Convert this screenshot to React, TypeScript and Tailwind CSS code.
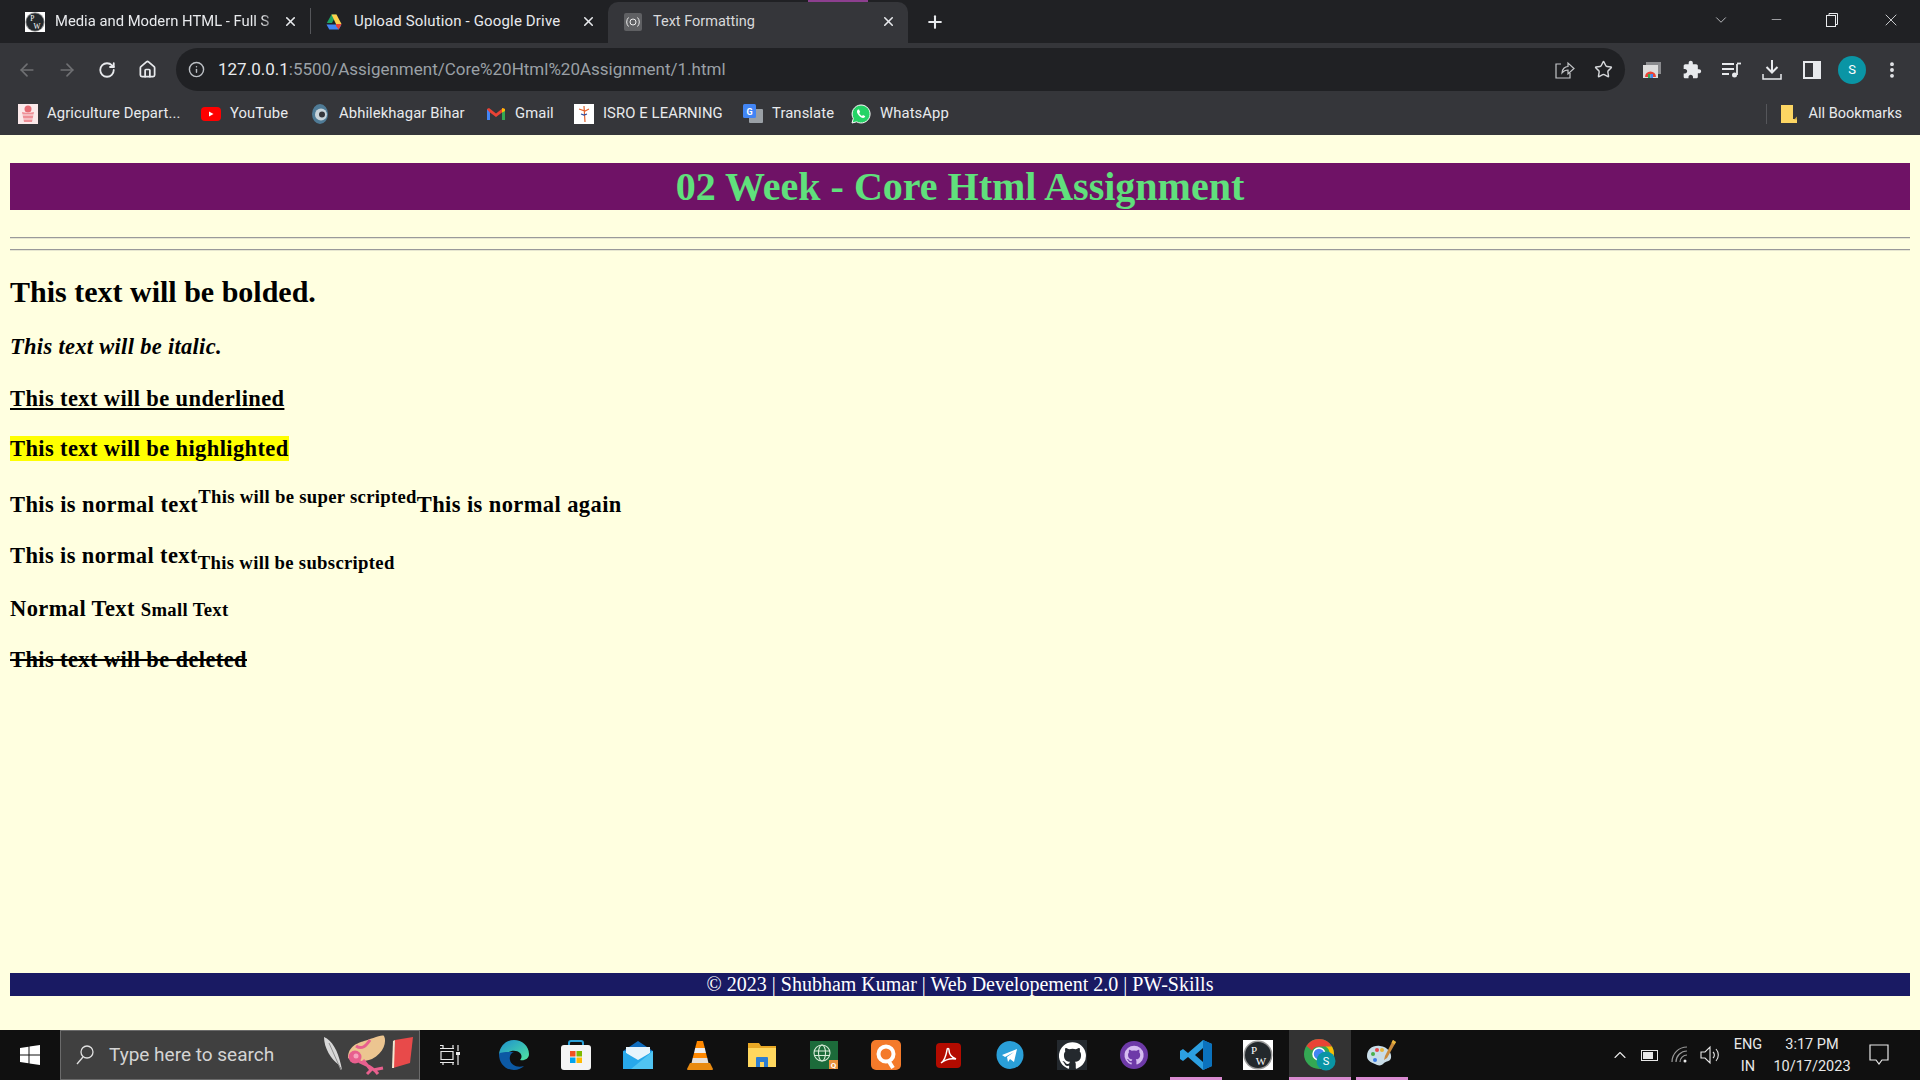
import React from "react";
import { ArrowLeft, ArrowRight, RotateCw, Home, Info, Star, Plus, X, ChevronDown, ChevronUp, Minus, EllipsisVertical } from "lucide-react";

const ui = "font-['Roboto','Open_Sans',sans-serif]";

const PW = ({ s = 18 }: { s?: number }) => (
  <svg width={s} height={s} viewBox="0 0 30 30">
    <rect width="30" height="30" fill="#fff" />
    <circle cx="15" cy="15" r="14.500" fill="#9a9a9a" />
    <circle cx="15" cy="15" r="13" fill="#23282c" />
    <text x="11" y="14" fontSize="11" fill="#fff" textAnchor="middle" fontFamily="Liberation Serif">P</text>
    <text x="18" y="25" fontSize="11" fill="#fff" textAnchor="middle" fontFamily="Liberation Serif">W</text>
  </svg>
);
const Drive = () => (
  <svg width="18" height="18" viewBox="0 0 18 18"><path d="M6.500 1.500h5L7 10H1.800z" fill="#1fa463" /><path d="M11.500 1.500L16.500 11H11L6.500 1.500z" fill="#ffd04b" /><path d="M4.300 16.500L1.500 11.500H16.500l-2.800 5z" fill="#4285f4" /><path d="M11 11h5.500l-2.800 5.500L11 13z" fill="#e94235" /></svg>
);
const Cast = () => (
  <svg width="18" height="18" viewBox="0 0 18 18"><rect width="18" height="18" rx="2" fill="#5f6063" /><circle cx="9" cy="9" r="3" fill="none" stroke="#eee" strokeWidth="1" /><path d="M4.500 4.500a6.500 6.500 0 000 9M13.500 4.500a6.500 6.500 0 010 9" fill="none" stroke="#eee" strokeWidth="1" /></svg>
);

function Tab({ icon, title, active, w, fade, cls, pl, iw }: { icon: React.ReactNode; title: string; active?: boolean; w: string; fade?: boolean; cls: string; pl: string; iw: string }) {
  return (
    <div className={`${w} h-full flex items-center ${pl} pb-[2px] shrink-0 ${active ? "bg-[#35363a] rounded-t-[10px] pr-[12px]" : "pr-[12px]"}`}>
      <div className={`${iw} shrink-0`}>{icon}</div>
      <span className={`flex-1 min-w-0 whitespace-nowrap ${cls} ${active ? "text-[#d8d9db]" : "text-[#e8eaed]"} ${fade ? "[mask-image:linear-gradient(to_right,black_92%,transparent_100%)]" : ""}`}>{title}</span>
      <X size={15} strokeWidth={2.5} className="text-[#e8eaed] ml-[4px] shrink-0" />
    </div>
  );
}

const Bm = ({ icon, label, w }: { icon: React.ReactNode; label: string; w: string }) => (
  <div className={`${w} flex items-center gap-[9px] shrink-0`}>
    <div className="w-[20px] h-[20px] flex items-center justify-center shrink-0">{icon}</div>
    <span className="text-[14.800px] tracking-[0.1px] text-[#e8eaed] whitespace-nowrap">{label}</span>
  </div>
);

const TbBtn = ({ children }: { children: React.ReactNode }) => (
  <div className="w-[40px] h-[43px] flex items-center justify-center shrink-0">{children}</div>
);

const Slot = ({ children, on, hi }: { children: React.ReactNode; on?: boolean; hi?: boolean }) => (
  <div className={`relative w-[62px] h-full flex items-center justify-center shrink-0 ${hi ? "bg-[#333333]" : ""}`}>
    {children}
    {on && <div className={`absolute bottom-0 h-[3px] bg-[#d88ad0] ${hi ? "left-0 right-0" : "left-[5px] right-[5px]"}`} />}
  </div>
);

const mark = "M12 .3a12 12 0 00-3.800 23.400c.6.100.8-.3.800-.6v-2c-3.300.7-4-1.600-4-1.600-.5-1.400-1.300-1.800-1.300-1.800-1.100-.7.100-.7.100-.7 1.200.1 1.800 1.200 1.800 1.200 1.100 1.800 2.800 1.300 3.500 1 .1-.8.4-1.300.8-1.600-2.700-.3-5.500-1.300-5.500-5.900 0-1.300.5-2.400 1.200-3.200-.1-.3-.5-1.500.1-3.200 0 0 1-.3 3.300 1.200a11.500 11.500 0 016 0c2.300-1.500 3.300-1.200 3.300-1.200.6 1.700.2 2.900.1 3.200.8.800 1.200 1.900 1.200 3.200 0 4.600-2.800 5.600-5.500 5.900.4.400.8 1.100.8 2.200v3.300c0 .3.200.7.800.6A12 12 0 0012 .3z";

const Row = ({ children, cls }: { children: React.ReactNode; cls: string }) => (
  <p className={`text-[22.500px] font-bold leading-[26px] whitespace-nowrap ${cls}`}>{children}</p>
);

export default function App() {
  return (
    <div className={`h-screen w-full flex flex-col overflow-hidden bg-[#ffffe0] ${ui}`}>
      {/* tab strip */}
      <div className="relative h-[43px] bg-[#202124] flex items-stretch pt-[2px] shrink-0">
        <Tab w="w-[310px]" pl="pl-[25px]" iw="w-[30px]" cls="text-[14.800px]" icon={<PW s={20} />} title="Media and Modern HTML - Full S" fade />
        <div className="w-px h-[26px] self-center bg-[#55565a] mb-[4px]" />
        <Tab w="w-[297px]" pl="pl-[14px]" iw="w-[29px]" cls="text-[15px] tracking-[0.15px]" icon={<Drive />} title="Upload Solution - Google Drive" />
        <Tab w="w-[300px]" pl="pl-[16px]" iw="w-[29px]" cls="text-[14.500px]" active icon={<Cast />} title="Text Formatting" />
        <div className="w-[54px] flex items-center justify-center pb-[2px]"><Plus size={20} strokeWidth={2.5} className="text-[#e8eaed]" /></div>
        <div className="absolute top-0 left-[808px] w-[60px] h-[2px] bg-[#8d3f8f]" />
        <div className="ml-auto flex items-center text-[#e8eaed] pb-[6px]">
          <ChevronDown size={18} strokeWidth={1} className="mr-[39px]" />
          <Minus size={15} strokeWidth={1} className="mr-[42px]" />
          <svg width="12" height="14" viewBox="0 0 12 14" className="mr-[43px]" fill="none" stroke="#e8eaed"><rect x=".5" y="2.500" width="9" height="11" /><path d="M3 2.500V.5h8.500v11H9.500" /></svg>
          <X size={20} strokeWidth={1} className="mr-[19px]" />
        </div>
      </div>

      {/* toolbar */}
      <div className="h-[49px] bg-[#35363a] flex items-start pl-[7px] pt-[5px] shrink-0">
        <TbBtn><ArrowLeft size={20} className="text-[#6f7073]" /></TbBtn>
        <TbBtn><ArrowRight size={20} className="text-[#6f7073]" /></TbBtn>
        <TbBtn><RotateCw size={18} strokeWidth={2.4} className="text-[#e8eaed]" /></TbBtn>
        <TbBtn><Home size={19} strokeWidth={2.2} className="text-[#e8eaed]" /></TbBtn>
        <div className="ml-[9px] w-[1449px] h-[43px] rounded-full bg-[#202124] flex items-center pl-[12px] pr-[12px] shrink-0">
          <Info size={17} className="text-[#bdc1c6]" />
          <span className="ml-[13px] text-[17px] text-[#e8eaed] whitespace-nowrap">127.0.0.1<span className="text-[#9aa0a6]">:5500/Assigenment/Core%20Html%20Assignment/1.html</span></span>
          <div className="ml-auto flex items-center gap-[19px] text-[#d5d7da]">
            <svg width="20" height="18" viewBox="0 0 20 18" fill="none" stroke="#c4c6c9" strokeWidth="1.200"><path d="M6 3H1v14h14v-5M7 12c0-4 3-6.500 6-6.500V2l6 5.500-6 5.500V9c-2.500 0-4.500 1-6 3z" /></svg>
            <Star size={19} strokeWidth={1.800} />
          </div>
        </div>
        <div className="ml-[7px] flex items-center">
          <TbBtn>
            <svg width="18" height="16" viewBox="0 0 18 16"><rect x="3" y="0" width="15" height="12" fill="#8a8b8e" /><rect x="0" y="3" width="15" height="13" fill="#dcdcdc" /><path d="M2 15a5.500 5.500 0 0111 0h-3a2.500 2.500 0 00-5 0z" fill="#ea4335" /><rect x="5" y="12" width="2.500" height="4" fill="#34a853" /><rect x="7.500" y="12" width="2.500" height="4" fill="#4285f4" /></svg>
          </TbBtn>
          <TbBtn>
            <svg width="20" height="20" viewBox="0 0 24 24" fill="#e8eaed"><path d="M20.500 11H19V7c0-1.100-.9-2-2-2h-4V3.500C13 2.120 11.880 1 10.500 1S8 2.120 8 3.500V5H4c-1.100 0-1.990.9-1.990 2v3.800H3.500c1.490 0 2.700 1.210 2.700 2.700s-1.210 2.700-2.700 2.700H2V20c0 1.100.9 2 2 2h3.800v-1.500c0-1.490 1.210-2.700 2.700-2.700 1.490 0 2.700 1.210 2.700 2.700V22H17c1.100 0 2-.9 2-2v-4h1.500c1.380 0 2.500-1.120 2.500-2.500S21.880 11 20.500 11z" /></svg>
          </TbBtn>
          <TbBtn>
            <svg width="20" height="16" viewBox="0 0 20 16" fill="none" stroke="#e8eaed" strokeWidth="1.800"><path d="M0 2h12M0 7h12M0 12h7" /><path d="M15 2v11" /><circle cx="12.500" cy="13" r="2.500" fill="#e8eaed" stroke="none" /><path d="M15 1.500h4" /></svg>
          </TbBtn>
          <TbBtn>
            <svg width="20" height="20" viewBox="0 0 20 20" fill="none" stroke="#e8eaed" strokeWidth="2"><path d="M10 0v12" /><path d="M4.500 7l5.500 5.500L15.500 7" /><path d="M1 14v5h18v-5" strokeWidth="1.500" /></svg>
          </TbBtn>
          <TbBtn><div className="w-[18px] h-[18px] bg-[#e8eaed] p-[2px] pr-[8px]"><div className="w-full h-full bg-[#35363a]" /></div></TbBtn>
          <TbBtn><div className="w-[28px] h-[28px] rounded-full bg-[#0a95a5] text-white text-[13px] flex items-center justify-center">S</div></TbBtn>
          <TbBtn><EllipsisVertical size={20} strokeWidth={2.6} className="text-[#e8eaed]" /></TbBtn>
        </div>
      </div>

      {/* bookmarks */}
      <div className="h-[43px] bg-[#35363a] flex items-center pl-[18px] pr-[18px] shrink-0">
        <Bm w="w-[183px]" label="Agriculture Depart..." icon={<svg width="20" height="20" viewBox="0 0 20 20"><rect width="20" height="20" fill="#fbe9ea" /><circle cx="10" cy="5" r="3.500" fill="#e56b74" /><path d="M4 8c3 1 9 1 12 0l-2 10H6z" fill="#ee8f97" /><path d="M3 11h14M5 15h10" stroke="#fbe9ea" /></svg>} />
        <Bm w="w-[109px]" label="YouTube" icon={<svg width="20" height="20" viewBox="0 0 20 20"><rect y="3" width="20" height="14" rx="4" fill="#f00" /><path d="M8 7.500l4.500 2.500L8 12.500z" fill="#fff" /></svg>} />
        <Bm w="w-[176px]" label="Abhilekhagar Bihar" icon={<svg width="20" height="22" viewBox="0 0 20 22"><ellipse cx="10" cy="11" rx="8" ry="10" fill="#4f7b96" /><circle cx="11" cy="11.500" r="6" fill="#c9d4da" /><circle cx="12" cy="11.500" r="3" fill="#35363a" /></svg>} />
        <Bm w="w-[88px]" label="Gmail" icon={<svg width="20" height="20" viewBox="0 0 20 20"><path d="M1 5l2-1 7 5.500L17 4l2 1v11h-3V8.500l-6 4.500-6-4.500V16H1z" fill="#ea4335" /><path d="M1 5.500V16h3V8.500z" fill="#4285f4" /><path d="M19 5.500V16h-3V8.500z" fill="#34a853" /><path d="M16 4l3 1v2l-3 1.500z" fill="#fbbc04" /></svg>} />
        <Bm w="w-[169px]" label="ISRO E LEARNING" icon={<svg width="20" height="20" viewBox="0 0 20 20"><rect width="20" height="20" fill="#fff" /><path d="M10 2l1 16M5 5l6 2 4-2" stroke="#e2612b" strokeWidth="1.200" fill="none" /><path d="M7 10l3 1 3-1" stroke="#2b4ba0" strokeWidth="1.200" fill="none" /></svg>} />
        <Bm w="w-[108px]" label="Translate" icon={<svg width="20" height="20" viewBox="0 0 20 20"><rect x="6" y="5" width="14" height="14" rx="1" fill="#9aa0a6" /><rect x="0" y="0" width="13" height="14" rx="1.500" fill="#4285f4" /><text x="6.500" y="10.500" fontSize="9" fontWeight="700" fill="#fff" textAnchor="middle" fontFamily="Roboto">G</text></svg>} />
        <Bm w="w-[150px]" label="WhatsApp" icon={<svg width="20" height="20" viewBox="0 0 20 20"><path d="M10 1a9 9 0 00-7.700 13.500L1 19l4.600-1.200A9 9 0 1010 1z" fill="#25d366" stroke="#fff" strokeWidth="1" /><path d="M7 5.500c-1.500 1-1.500 3 .5 5.500s4.500 3.700 6 2.500l.8-1.300-2.300-1.300-1 1c-1-.4-2.300-1.800-2.800-3l1-1-1.200-2.400z" fill="#fff" /></svg>} />
        <div className="ml-auto w-px h-[20px] bg-[#55565a] mr-[14px]" />
        <svg width="16" height="18" viewBox="0 0 16 18" className="mr-[12px] shrink-0"><path d="M0 0h12v14h4v4H0z" fill="#fdd663" /><path d="M13 14.500l3-3v3z" fill="#c9a742" /></svg>
        <span className="text-[14.500px] text-[#e8eaed] whitespace-nowrap">All Bookmarks</span>
      </div>

      {/* page */}
      <div className="flex-1 min-h-0 flex flex-col px-[10px] pt-[28px] pb-[34px] text-black font-['Liberation_Serif',serif]">
        <h1 className="h-[47px] bg-[#6f1266] text-[#60e07c] text-[40px] font-bold leading-[47px] text-center shrink-0">02 Week - Core Html Assignment</h1>
        <hr className="mt-[27px] border-0 border-t border-b border-t-[#9a9a9a] border-b-[#e6e6d0] h-[2px]" />
        <hr className="mt-[10px] border-0 border-t border-b border-t-[#9a9a9a] border-b-[#e6e6d0] h-[2px]" />
        <h2 className="mt-[23px] text-[30px] font-bold leading-[35px] whitespace-nowrap">This text will be bolded.</h2>
        <Row cls="mt-[25px] italic tracking-[0.3px]">This text will be italic.</Row>
        <Row cls="mt-[26px] underline tracking-[0.38px]">This text will be underlined</Row>
        <Row cls="mt-[24px] tracking-[0.38px]"><mark className="bg-[#ffff00] text-black">This text will be highlighted</mark></Row>
        <Row cls="mt-[30px] tracking-[0.4px]">This is normal text<sup className="text-[18.700px] tracking-[0.3px] align-[9.500px] leading-[0] top-0">This will be super scripted</sup>This is normal again</Row>
        <Row cls="mt-[25px] tracking-[0.38px]">This is normal text<sub className="text-[18.700px] tracking-[0.3px] align-[-6px] leading-[0] bottom-0">This will be subscripted</sub></Row>
        <Row cls="mt-[27px] tracking-[0.38px]">Normal Text <small className="text-[18.700px] tracking-[0.3px]">Small Text</small></Row>
        <Row cls="mt-[24px] line-through tracking-[0.38px]">This text will be deleted</Row>
        <footer className="mt-auto h-[23px] bg-[#191a63] text-white text-center text-[20px] leading-[23px] shrink-0">© 2023 | Shubham Kumar | Web Developement 2.0 | PW-Skills</footer>
      </div>

      {/* taskbar */}
      <div className={`h-[50px] bg-[#101010] flex items-stretch shrink-0 ${ui}`}>
        <div className="w-[60px] flex items-center justify-center shrink-0">
          <svg width="20" height="20" viewBox="0 0 20 20" fill="#fff"><path d="M0 3l8.500-1.200V9.500H0zM9.500 1.600L20 0v9.500H9.500zM0 10.500h8.500v7.700L0 17zM9.500 10.500H20V20l-10.500-1.500z" /></svg>
        </div>
        <div className="w-[360px] bg-[#404040] border border-[#6b6b6b] flex items-center pl-[14px] shrink-0">
          <svg width="20" height="22" viewBox="0 0 20 22" fill="none" stroke="#e0e0e0" strokeWidth="1.300"><circle cx="12" cy="8" r="6" /><path d="M8 13L2 20" /></svg>
          <span className="ml-[14px] text-[19px] text-[#d4d4d4] whitespace-nowrap">Type here to search</span>
          <svg width="90" height="42" viewBox="0 0 90 42" className="ml-auto mr-[6px]">
            <path d="M1 3c8 3 14 14 17 28l1 5-3-5C8 25 1 14 1 3z" fill="#d8d8d8" />
            <path d="M6 9l12 27" stroke="#909090" strokeWidth="1" />
            <path d="M25 24c0-12 10-15 16-17 5-1 18-7 20-5 3 5 0 17-12 23-8 3-18 4-24-1z" fill="#ecc590" />
            <path d="M33 12c6 4 10 0 14-6" stroke="#e8608e" strokeWidth="3" fill="none" />
            <path d="M33 24c2 6 14 5 22 16M40 26l8 10-4 4M50 36l10-2" stroke="#e8608e" strokeWidth="3" fill="none" />
            <circle cx="32" cy="23" r="6.500" fill="#e85f8e" />
            <circle cx="33" cy="22" r="2.500" fill="#f7a3bd" />
            <path d="M72 6l18-3-3 26-17 5z" fill="#e84a4a" />
            <path d="M70 7l2-1-1 28h-2z" fill="#f5e6d0" />
          </svg>
        </div>
        <div className="w-[63px] pr-[3px] flex items-center justify-center shrink-0"><svg width="20" height="20" viewBox="0 0 20 20" fill="none" stroke="#e8e8e8" strokeWidth="1.200"><path d="M0 .5h3M3 0v3M13 0v3M0 3.500h14M1 6.500h12v8H1zM0 17.500h14M3 17v3M13 17v3M18 0v6M18 10v10" /><rect x="16" y="7" width="4" height="3" fill="#e8e8e8" stroke="none" /></svg></div>
        <Slot>
          <svg width="30" height="30" viewBox="0 0 30 30"><defs><linearGradient id="eg" x1="0" y1="0" x2="1" y2="1"><stop offset="0" stopColor="#1d8fd0" /><stop offset="1" stopColor="#50e6a0" /></linearGradient></defs><path d="M0 14C1 6 7 0 15 0s15 6 15 14c0 5-5 7-9 6 2-2 2-5 0-7-3-3-9-3-13 0-4 3-8 2-8 1z" fill="url(#eg)" /><path d="M0 14c0 9 6 16 15 16 4 0 8-2 10-4-7 2-13-1-14-6-1-4 1-7 4-8-7 0-15 0-15 2z" fill="#0c59a4" /></svg>
        </Slot>
        <Slot>
          <svg width="30" height="30" viewBox="0 0 30 30"><path d="M8 7V3a2 2 0 012-2h10a2 2 0 012 2v4" fill="none" stroke="#2aa0d8" strokeWidth="2" /><rect x="0" y="5" width="30" height="25" rx="3" fill="#f4f4f4" /><rect x="9" y="11" width="5.500" height="5.500" fill="#f25022" /><rect x="15.500" y="11" width="5.500" height="5.500" fill="#7fba00" /><rect x="9" y="17.500" width="5.500" height="5.500" fill="#00a4ef" /><rect x="15.500" y="17.500" width="5.500" height="5.500" fill="#ffb900" /></svg>
        </Slot>
        <Slot>
          <svg width="30" height="28" viewBox="0 0 30 28"><path d="M15 0L30 10v1H0v-1z" fill="#0f6cbd" /><rect y="10" width="30" height="18" rx="1" fill="#28a8ea" /><path d="M3 6h24v6L15 19 3 12z" fill="#e6f4fc" /><path d="M0 10l15 11L30 10v18H0z" fill="#28a8ea" /><path d="M30 10v18H8z" fill="#50c4f2" /></svg>
        </Slot>
        <Slot>
          <svg width="26" height="30" viewBox="0 0 26 30"><path d="M10 1h6l1.800 7H8.200z" fill="#ff8800" /><path d="M8.200 8h9.600l1.200 5H7z" fill="#eee" /><path d="M7 13h12l1.300 5H5.700z" fill="#ff8800" /><path d="M5.700 18h14.600l1.200 5H4.500z" fill="#e8e0d8" /><path d="M3 23h20l3 6a1 1 0 01-1 1H1a1 1 0 01-1-1z" fill="#e98a10" /></svg>
        </Slot>
        <Slot>
          <svg width="28" height="24" viewBox="0 0 28 24"><path d="M0 0h11l2 3h15v8H0z" fill="#e9a825" /><rect y="5" width="28" height="19" fill="#ffd75e" /><path d="M8 24V15a1 1 0 011-1h10a1 1 0 011 1v9h-4v-5h-4v5z" fill="#2d7dd2" /></svg>
        </Slot>
        <Slot>
          <svg width="28" height="28" viewBox="0 0 28 28"><rect width="28" height="28" fill="#1c6b3a" /><circle cx="12" cy="12" r="8" fill="none" stroke="#d8ecd8" strokeWidth="1.100" /><ellipse cx="12" cy="12" rx="3.500" ry="8" fill="none" stroke="#d8ecd8" strokeWidth="1.100" /><path d="M4 10h16M4 14.500h16" stroke="#d8ecd8" strokeWidth="1.100" /><rect x="19" y="19" width="9" height="9" fill="#e8903c" /><text x="23.500" y="27" fontSize="8" fontWeight="700" fill="#fff" textAnchor="middle" fontFamily="Roboto">Q</text></svg>
        </Slot>
        <Slot>
          <svg width="30" height="30" viewBox="0 0 30 30"><rect width="30" height="30" rx="5" fill="#f47a2a" /><circle cx="15" cy="14" r="7.500" fill="none" stroke="#fff" strokeWidth="4" /><path d="M17 20l5 8" stroke="#fff" strokeWidth="4" /></svg>
        </Slot>
        <Slot>
          <svg width="25" height="25" viewBox="0 0 25 25"><rect width="25" height="25" rx="4" fill="#b30b00" /><path d="M5 20c3-2 5-7 6-13 0-2 2-2 2 0 0 4 2 7 7 9-5-1-10 0-15 4z" fill="none" stroke="#fff" strokeWidth="1.500" /></svg>
        </Slot>
        <Slot>
          <svg width="28" height="28" viewBox="0 0 28 28"><ellipse cx="14" cy="14" rx="13.500" ry="14" fill="#2a9fd8" /><path d="M6 14l15-6-3 13-4-3-2 3-1-5 7-5-9 5z" fill="#fff" /></svg>
        </Slot>
        <Slot>
          <div className="w-[30px] h-[30px] bg-[#24292e] flex items-center justify-center">
            <svg width="27" height="27" viewBox="0 0 24 24"><path d={mark} fill="#fff" /></svg>
          </div>
        </Slot>
        <Slot>
          <svg width="28" height="28" viewBox="0 0 28 28"><circle cx="14" cy="14" r="14" fill="#6e3aa8" /><g transform="translate(4.500 4.500) scale(.8)"><path d={mark} fill="#d6bdf0" /></g></svg>
        </Slot>
        <Slot on>
          <svg width="32" height="30" viewBox="0 0 32 30"><path d="M23 0l9 4v22l-9 4L8 17l-5 4-3-2v-8l3-2 5 4z" fill="#2c9fe0" /><path d="M23 0l9 4v22l-9 4z" fill="#0b72bd" /><path d="M23 8l-8 7 8 7z" fill="#101010" /></svg>
        </Slot>
        <Slot><PW s={30} /></Slot>
        <Slot on hi>
          <svg width="32" height="32" viewBox="0 0 32 32"><circle cx="15" cy="15" r="15" fill="#34a853" /><path d="M15 0a15 15 0 0113 7.500H15a7.500 7.500 0 00-7 4L2.500 7A15 15 0 0115 0z" fill="#ea4335" /><path d="M28 7.500A15 15 0 0116 30l5-9a7.500 7.500 0 00.5-13.500z" fill="#fbbc04" /><circle cx="15" cy="15" r="6" fill="#4285f4" stroke="#fff" strokeWidth="1.500" /><circle cx="22" cy="22" r="9.500" fill="#0a95a5" /><text x="22" y="26" fontSize="11" textAnchor="middle" fill="#fff" fontFamily="Roboto">S</text></svg>
        </Slot>
        <Slot on>
          <svg width="30" height="30" viewBox="0 0 30 30"><path d="M0 16c0-7 6-11 13-10 8 1 12 7 11 12-1 4-5 3-7 5-2 3-6 3-9 1-5-2-8-4-8-8z" fill="#c9dde8" /><circle cx="6" cy="14" r="2" fill="#4ab04a" /><circle cx="10" cy="10" r="2" fill="#e84a4a" /><circle cx="15" cy="10" r="2" fill="#e8b53a" /><circle cx="8" cy="20" r="2" fill="#3a7de8" /><path d="M26 0l3 2-9 16-3 2 1-4z" fill="#c98a3c" /><path d="M26 0l3 2-1.500 2.500-3-2z" fill="#e8b53a" /></svg>
        </Slot>
        <div className="ml-auto flex items-center text-[#e8e8e8] shrink-0">
          <ChevronUp size={20} strokeWidth={1.300} className="mr-[11px]" />
          <div className="w-[17px] h-[11px] border border-[#e8e8e8] p-[1px] mr-[13px]"><div className="w-[10px] h-full bg-[#e8e8e8]" /></div>
          <svg width="18" height="18" viewBox="0 0 18 18" fill="none" stroke="#9a9a9a" strokeWidth="1.200" className="mr-[11px]"><path d="M1 16a15 15 0 0115-15M5 16a11 11 0 0111-11M9 16a7 7 0 017-7" /><circle cx="14" cy="15" r="1.500" fill="#e8e8e8" stroke="none" /></svg>
          <svg width="22" height="20" viewBox="0 0 22 20" fill="none" stroke="#e8e8e8" strokeWidth="1.100" className="mr-[8px]"><path d="M1 7h4l5-5v16l-5-5H1zM13 7a4 4 0 010 6M16 4a9 9 0 010 12" /></svg>
          <div className="w-[36px] pt-[1px] flex flex-col items-center text-[14.500px] leading-[22px] text-[#e8e8e8]"><span>ENG</span><span>IN</span></div>
          <div className="ml-[4px] w-[84px] pt-[1px] flex flex-col items-center text-[14.500px] leading-[22px] text-[#e8e8e8]"><span>3:17 PM</span><span>10/17/2023</span></div>
          <svg width="20" height="22" viewBox="0 0 20 22" fill="none" stroke="#e8e8e8" strokeWidth="1.200" className="ml-[15px] mr-[31px]"><path d="M1 1h18v15h-6l-3 4-3-4H1z" /></svg>
        </div>
      </div>
    </div>
  );
}
